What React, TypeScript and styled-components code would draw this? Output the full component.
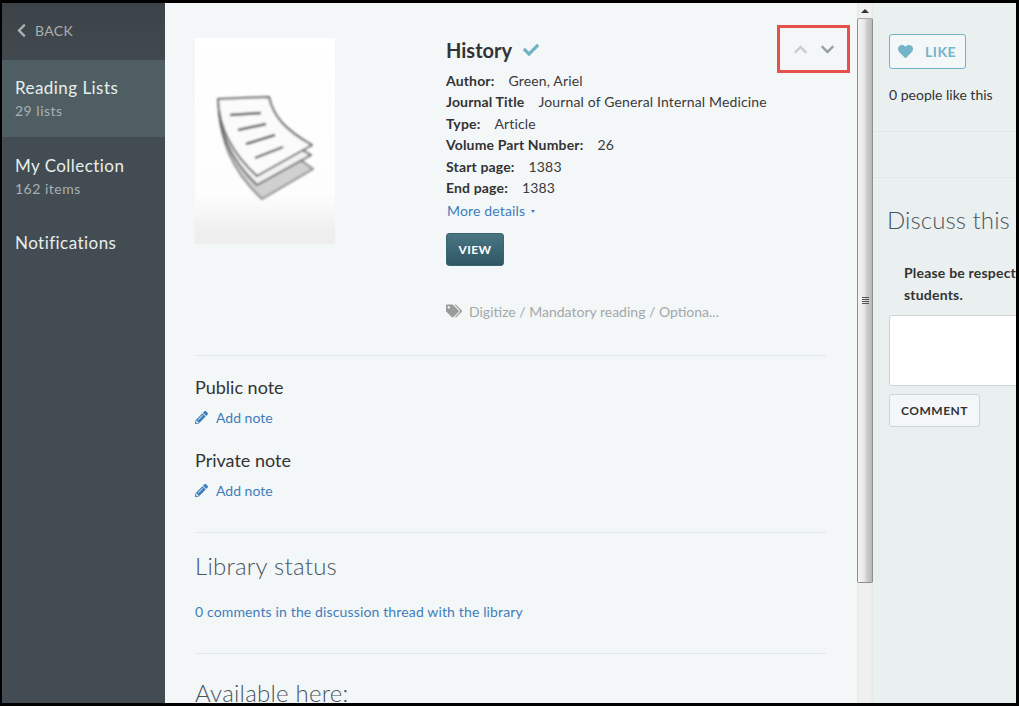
import { createGlobalStyle, styled } from 'styled-components';
import { FaCheck, FaChevronDown, FaChevronLeft, FaChevronUp, FaHeart, FaPencilAlt, FaTags } from 'react-icons/fa';

const GlobalStyle = createGlobalStyle`
  html, body {
    margin: 0;
    padding: 0;
    height: 100%;
    overflow: hidden;
  }
  * { box-sizing: border-box; }
`;

const metadata = [
  { label: 'Author:', value: 'Green, Ariel' },
  { label: 'Journal Title', value: 'Journal of General Internal Medicine' },
  { label: 'Type:', value: 'Article' },
  { label: 'Volume Part Number:', value: '26' },
  { label: 'Start page:', value: '1383' },
  { label: 'End page:', value: '1383' },
];

function DocumentThumb() {
  return (
    <svg width="140" height="206" viewBox="0 0 140 206">
      <defs>
        <filter id="soft"><feGaussianBlur stdDeviation="1.2" /></filter>
        <linearGradient id="fade" x1="0" y1="0" x2="0" y2="1">
          <stop offset="0" stopColor="#ffffff" />
          <stop offset="0.76" stopColor="#fdfdfd" />
          <stop offset="0.92" stopColor="#f1f0f0" />
          <stop offset="1" stopColor="#eeeded" />
        </linearGradient>
      </defs>
      <rect width="140" height="206" fill="url(#fade)" />
      <g filter="url(#soft)" stroke="#666" strokeWidth="2" strokeLinejoin="round">
        <path d="M24 72 C26 100 34 130 67 161 L118 131 L107 123 Z" fill="#d0d0d0" stroke="#8a8a8a" />
        <path d="M24 62 C22 90 34 120 62 147 L116 117 L100 108 Z" fill="#f2f2f2" />
        <path d="M23 61 L74 59 C78 78 90 92 117 107 L62 138 C40 118 24 92 23 61 Z" fill="#fbfbfb" />
        <g fill="none" stroke="#555" strokeWidth="2.4">
          <path d="M35 77 L66 75" />
          <path d="M43 92 L71 86" />
          <path d="M51 106 L80 97" />
          <path d="M60 120 L88 109" />
        </g>
      </g>
    </svg>
  );
}

export default function App() {
  return (
    <>
      <GlobalStyle />
      <Frame>
        <Sidebar>
          <BackRow>
            <FaChevronLeft size={15} />
            <span>BACK</span>
          </BackRow>
          <NavItem $active>
            <NavTitle>Reading Lists</NavTitle>
            <NavSub>29 lists</NavSub>
          </NavItem>
          <NavItem>
            <NavTitle>My Collection</NavTitle>
            <NavSub>162 items</NavSub>
          </NavItem>
          <NavItem>
            <NavTitle>Notifications</NavTitle>
          </NavItem>
        </Sidebar>

        <Main>
          <Header>
            <Thumb>
              <DocumentThumb />
            </Thumb>
            <Details>
              <TitleRow>
                <Title>History</Title>
                <FaCheck size={16} color="#6fb2c6" />
              </TitleRow>
              <MetaList>
                {metadata.map((item) => (
                  <MetaRow key={item.label}>
                    <strong>{item.label}</strong>
                    <span>{item.value}</span>
                  </MetaRow>
                ))}
              </MetaList>
              <MoreDetails>
                More details <Caret />
              </MoreDetails>
              <ViewButton>VIEW</ViewButton>
              <TagsRow>
                <FaTags size={16} color="#9a9a9a" />
                <span>Digitize / Mandatory reading / Optiona...</span>
              </TagsRow>
            </Details>
            <Pager>
              <FaChevronUp size={15} color="#c9cfd0" />
              <FaChevronDown size={15} color="#97a1a3" />
            </Pager>
          </Header>

          <NotesSection>
            <NoteTitle>Public note</NoteTitle>
            <AddNote>
              <FaPencilAlt size={13} />
              <span>Add note</span>
            </AddNote>
            <NoteTitle $spaced>Private note</NoteTitle>
            <AddNote>
              <FaPencilAlt size={13} />
              <span>Add note</span>
            </AddNote>
          </NotesSection>

          <StatusSection>
            <SectionTitle>Library status</SectionTitle>
            <ThreadLink>0 comments in the discussion thread with the library</ThreadLink>
          </StatusSection>

          <AvailableSection>
            <SectionTitle>Available here:</SectionTitle>
          </AvailableSection>
        </Main>

        <Scrollbar>
          <ScrollArrow />
          <ScrollThumb>
            <Grip />
          </ScrollThumb>
        </Scrollbar>

        <RightPanel>
          <LikeBlock>
            <LikeButton>
              <FaHeart size={15} />
              <span>LIKE</span>
            </LikeButton>
            <LikeCount>0 people like this</LikeCount>
          </LikeBlock>
          <EmptyBlock />
          <DiscussBlock>
            <DiscussTitle>Discuss this</DiscussTitle>
            <Notice>Please be respectful of other students.</Notice>
            <CommentBox />
            <CommentButton>COMMENT</CommentButton>
          </DiscussBlock>
        </RightPanel>
      </Frame>
    </>
  );
}

const Frame = styled.div`
  position: relative;
  display: flex;
  width: 1019px;
  height: 706px;
  overflow: hidden;
  border-style: solid;
  border-color: #000;
  border-width: 3px 3px 3px 2px;
  font-family: 'Lato', 'Liberation Sans', sans-serif;
  background: #f3f7f8;
`;

const Sidebar = styled.nav`
  flex: 0 0 163px;
  background: #434c52;
  color: #e6ecec;
`;

const BackRow = styled.div`
  display: flex;
  align-items: center;
  gap: 6px;
  height: 57px;
  padding-left: 12px;
  background: linear-gradient(#3c4348, #41494f);
  color: #a8afb1;
  font-size: 14px;
  letter-spacing: 0.3px;

  svg { margin-top: -2px; }
  span { margin-top: -2px; }
`;

const NavItem = styled.div<{ $active?: boolean }>`
  height: 77px;
  padding: ${({ $active }) => ($active ? '17px' : '18px')} 13px 0;
  background: ${({ $active }) => ($active ? '#4f5e62' : 'transparent')};
`;

const NavTitle = styled.div`
  font-size: 17px;
  line-height: 22px;
  letter-spacing: 0.45px;
  color: #e8eeee;
`;

const NavSub = styled.div`
  margin-top: 3px;
  font-size: 14px;
  line-height: 18px;
  letter-spacing: 0.5px;
  color: #a9b1b3;
`;

const Main = styled.main`
  flex: 0 0 692px;
  height: 700px;
  overflow: hidden;
  padding: 35px 31px 0 30px;
  color: #333;
`;

const Header = styled.section`
  position: relative;
  display: flex;
  gap: 111px;
  height: 318px;
  border-bottom: 1px solid #e0e8ea;
`;

const Thumb = styled.div`
  flex: 0 0 140px;
  height: 206px;
`;

const Details = styled.div`
  flex: 1;
  min-width: 0;
`;

const TitleRow = styled.div`
  display: flex;
  align-items: center;
  gap: 11px;
  height: 24px;
`;

const Title = styled.h2`
  margin: 0;
  font-size: 20px;
  font-weight: 700;
  color: #333;
`;

const MetaList = styled.div`
  margin-top: 8px;
`;

const MetaRow = styled.div`
  display: flex;
  gap: 14px;
  height: 21.4px;
  font-size: 14px;
  line-height: 21px;
  letter-spacing: 0.15px;
  white-space: nowrap;
  color: #3a3a3a;

  strong { font-weight: 700; color: #333; }
`;

const MoreDetails = styled.a`
  display: flex;
  align-items: center;
  gap: 6px;
  margin: 1px 0 0 1px;
  height: 22px;
  font-size: 14px;
  letter-spacing: 0.15px;
  color: #3f7dbb;
`;

const Caret = styled.i`
  width: 0;
  height: 0;
  margin-top: 3px;
  border-style: solid;
  border-width: 3px 2px 0;
  border-color: #3f7dbb transparent transparent;
`;

const ViewButton = styled.button`
  display: block;
  width: 58px;
  height: 33px;
  margin-top: 12px;
  padding: 0;
  border: 1px solid #3a6470;
  border-radius: 3px;
  background: linear-gradient(#4a7683, #2f5663);
  color: #fff;
  font-family: inherit;
  font-size: 12px;
  font-weight: 700;
  letter-spacing: 0.4px;
`;

const TagsRow = styled.div`
  display: flex;
  align-items: center;
  gap: 7px;
  margin-top: 34px;
  height: 22px;
  font-size: 14px;
  color: #a3a8a9;
`;

const Pager = styled.div`
  position: absolute;
  top: -13px;
  left: 582px;
  display: flex;
  align-items: center;
  justify-content: center;
  gap: 12px;
  width: 73px;
  height: 48px;
  border: 3px solid #e8504a;
`;

const NotesSection = styled.section`
  height: 177px;
  padding-top: 19px;
  border-bottom: 1px solid #e0e8ea;
`;

const NoteTitle = styled.h3<{ $spaced?: boolean }>`
  margin: ${({ $spaced }) => ($spaced ? '21px' : '0')} 0 0;
  font-size: 18px;
  font-weight: 400;
  line-height: 24px;
  color: #333;
`;

const AddNote = styled.a`
  display: flex;
  align-items: center;
  gap: 8px;
  margin-top: 8px;
  height: 20px;
  font-size: 14px;
  color: #3f7dbb;
`;

const SectionTitle = styled.h2`
  margin: 0;
  font-size: 24px;
  font-weight: 300;
  line-height: 32px;
  letter-spacing: 0.25px;
  color: #4a5560;
`;

const StatusSection = styled.section`
  height: 121px;
  padding-top: 17px;
  border-bottom: 1px solid #e0e8ea;
`;

const ThreadLink = styled.a`
  display: block;
  margin-top: 20px;
  font-size: 14px;
  line-height: 20px;
  letter-spacing: 0.14px;
  color: #3f7dbb;
`;

const AvailableSection = styled.section`
  padding-top: 23px;
`;

const Scrollbar = styled.div`
  flex: 0 0 16px;
  height: 700px;
  background: linear-gradient(90deg, #e6e8e8, #f0f0f0 15%, #f0f0f0 85%, #e4e8e8);
`;

const ScrollArrow = styled.div`
  width: 0;
  height: 0;
  margin: 6px auto 5px;
  border-style: solid;
  border-width: 0 4px 4px;
  border-color: transparent transparent #333;
`;

const ScrollThumb = styled.div`
  display: flex;
  align-items: center;
  justify-content: center;
  height: 565px;
  border: 1px solid #8f8f8f;
  border-top-color: #aaa;
  border-radius: 2px;
  background: linear-gradient(90deg, #f4f4f4, #e8e8e8 45%, #d0d0d0 60%, #b8b8b8);
`;

const Grip = styled.div`
  width: 7px;
  height: 7px;
  background: repeating-linear-gradient(#555 0 1px, transparent 1px 2px);
`;

const RightPanel = styled.aside`
  flex: 1;
  min-width: 0;
  overflow: hidden;
  background: #eaf0f0;
  color: #333;
`;

const LikeBlock = styled.div`
  height: 129px;
  padding: 31px 16px 0;
  border-bottom: 1px solid #e0e8e8;
`;

const LikeButton = styled.button`
  display: flex;
  align-items: center;
  gap: 12px;
  width: 77px;
  height: 35px;
  padding: 0 0 0 8px;
  border: 1px solid #74b4c8;
  border-radius: 3px;
  background: #f3f7f8;
  color: #74b4c8;
  font-family: inherit;
  font-size: 14px;
  font-weight: 700;
  letter-spacing: 0.5px;
`;

const LikeCount = styled.div`
  margin-top: 17px;
  font-size: 14px;
  white-space: nowrap;
`;

const EmptyBlock = styled.div`
  height: 46px;
  border-bottom: 1px solid #e0e8e8;
`;

const DiscussBlock = styled.div`
  width: 300px;
  padding: 26px 0 0 14px;
`;

const DiscussTitle = styled.h2`
  margin: 0;
  font-size: 24px;
  font-weight: 300;
  line-height: 32px;
  letter-spacing: 0.08px;
  color: #4a5560;
`;

const Notice = styled.p`
  margin: 26px 0 0 17px;
  width: 200px;
  font-size: 14px;
  font-weight: 700;
  line-height: 22px;
  letter-spacing: 0.2px;
`;

const CommentBox = styled.div`
  width: 280px;
  height: 71px;
  margin: 9px 0 0 2px;
  border: 1px solid #cfd3d3;
  border-radius: 3px;
  background: #fff;
`;

const CommentButton = styled.button`
  display: block;
  width: 91px;
  height: 33px;
  margin: 8px 0 0 2px;
  padding: 0;
  border: 1px solid #cfd5d5;
  border-radius: 3px;
  background: #f3f7f8;
  color: #333;
  font-family: inherit;
  font-size: 12px;
  font-weight: 700;
  letter-spacing: 0.5px;
`;
